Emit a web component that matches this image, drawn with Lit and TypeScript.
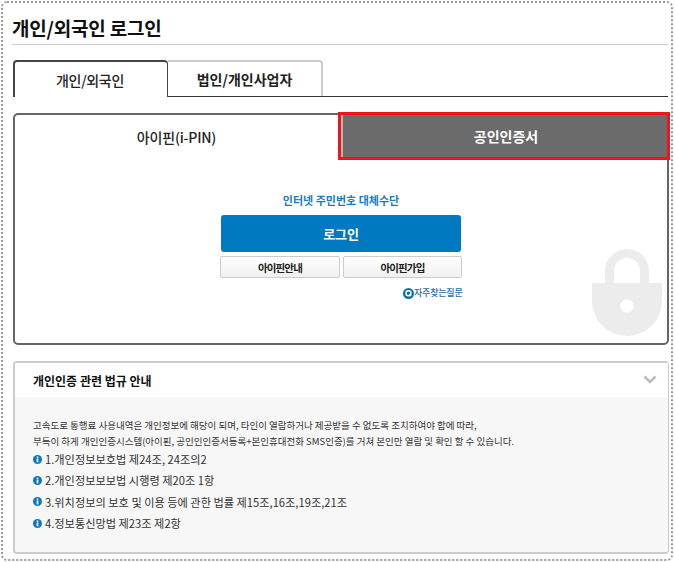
import { LitElement, html, css } from "lit";
import { customElement } from "lit/decorators.js";

const info = html`<svg class="info" viewBox="0 0 10 10" aria-hidden="true"><circle cx="5" cy="5" r="5" fill="#0d78bf"/><rect x="4.100" y="1.700" width="1.800" height="1.500" fill="#fff"/><rect x="4.100" y="3.900" width="1.800" height="4.300" fill="#fff"/></svg>`;

@customElement("app-root")
export class AppRoot extends LitElement {
  static styles = css`
    :host {
      display: block;
      width: 675px;
      height: 562px;
      box-sizing: border-box;
      padding: 1px;
      background: #fff;
      font-family: "Noto Sans CJK KR", "Noto Sans", sans-serif;
      color: #222;
    }
    * { box-sizing: border-box; }
    .frame {
      height: 100%;
      width: 672px;
      border: 2px dotted #9a9a9a;
      border-radius: 6px;
      padding-left: 10px;
      display: flex;
      flex-direction: column;
    }
    .title {
      margin: 0 0 0 -1px;
      height: 42px;
      width: 656px;
      padding-top: 12px;
      border-bottom: 1px solid #ccc;
      font-size: 19px;
      line-height: 26px;
      font-weight: 700;
      color: #111;
      letter-spacing: -0.2px;
      flex: none;
    }
    .tabs {
      margin-top: 15px;
      display: flex;
      width: 655px;
      height: 37px;
      border-bottom: 1px solid #333;
      flex: none;
    }
    .tab {
      width: 155px;
      height: 36px;
      border: 2px solid #ccc;
      border-bottom: 0;
      border-left: 0;
      border-radius: 0 4px 0 0;
      display: flex;
      align-items: center;
      justify-content: center;
      font-size: 14px;
      font-weight: 700;
      color: #222;
      background: #fff;
    }
    .tab.on {
      width: 155px;
      height: 37px;
      padding-right: 2px;
      border: 1px solid #444;
      border-width: 2px 1px 0 2px;
      border-radius: 4px 4px 0 0;
      font-weight: 500;
      letter-spacing: -0.3px;
    }
    .panel {
      margin-top: 16px;
      width: 656px;
      height: 232px;
      border: 2px solid #666;
      border-radius: 5px;
      position: relative;
      display: flex;
      flex-direction: column;
      align-items: center;
      flex: none;
    }
    .subtabs {
      align-self: stretch;
      display: flex;
      height: 48px;
      margin: -3px -3px 0 0;
    }
    .sub {
      flex: 1;
      display: flex;
      align-items: center;
      justify-content: center;
      padding-top: 2px;
      font-size: 14px;
      font-weight: 500;
      letter-spacing: -0.2px;
      color: #222;
    }
    .sub.on {
      flex: none;
      width: 332px;
      padding: 0 0 0 4px;
      border: 3px solid #f0141c;
      background: #6b6b6b;
      box-shadow: inset 2px 0 0 #b5b5b5;
      color: #fff;
      font-weight: 700;
      letter-spacing: 0;
    }
    .lead {
      margin-top: 32px;
      font-size: 11px;
      line-height: 16px;
      font-weight: 700;
      color: #1a7cc2;
    }
    .login {
      margin-top: 7px;
      width: 240px;
      height: 37px;
      border-radius: 3px;
      background: #0079c2;
      color: #fff;
      display: flex;
      align-items: center;
      justify-content: center;
      font-size: 13px;
      font-weight: 700;
      letter-spacing: -0.2px;
    }
    .btns {
      margin-top: 4px;
      display: flex;
      gap: 3px;
    }
    .btn {
      height: 22px;
      border: 1px solid #ccc;
      border-radius: 2px;
      background: linear-gradient(#fff, #f0f0f0);
      display: flex;
      align-items: center;
      justify-content: center;
      font-size: 10.500px;
      font-weight: 700;
      letter-spacing: -0.9px;
      color: #222;
    }
    .btn.a { width: 120px; }
    .btn.b { width: 119px; }
    .faq {
      margin: 8px 0 0 3px;
      width: 240px;
      display: flex;
      justify-content: flex-end;
      align-items: center;
      font-size: 9px;
      line-height: 14px;
      font-weight: 500;
      color: #1a6ea8;
      letter-spacing: -0.2px;
    }
    .faq svg { width: 11px; height: 11px; flex: none; }
    .lock {
      position: absolute;
      right: 5px;
      bottom: 7px;
      width: 70px;
      height: 87px;
    }
    .notice {
      margin-top: 16px;
      width: 656px;
      height: 193px;
      border: 1px solid #ccc;
      border-width: 2px 1px 2px 2px;
      border-radius: 4px;
      background: #f7f7f7;
      display: flex;
      flex-direction: column;
      flex: none;
    }
    .head {
      height: 34px;
      flex: none;
      background: #fff;
      display: flex;
      align-items: center;
      justify-content: space-between;
      padding: 1px 11px 0 18px;
      font-size: 12px;
      font-weight: 700;
      color: #111;
    }
    .head svg { width: 14px; height: 9px; margin-top: -3px; }
    .body { padding: 20px 18px 0; }
    .body p {
      margin: 0;
      font-size: 9.500px;
      line-height: 16px;
      color: #333;
    }
    .law {
      margin: 2px 0 0;
      padding: 0;
      list-style: none;
      display: flex;
      flex-direction: column;
      gap: 5.400px;
    }
    .law li {
      display: flex;
      align-items: center;
      gap: 3px;
      height: 16px;
      font-size: 11.200px;
      line-height: 16px;
      color: #333;
    }
    .info { width: 9px; height: 9px; flex: none; }
  `;

  render() {
    return html`
      <div class="frame">
        <h1 class="title">개인/외국인 로그인</h1>
        <div class="tabs">
          <div class="tab on">개인/외국인</div>
          <div class="tab">법인/개인사업자</div>
        </div>
        <div class="panel">
          <svg class="lock" viewBox="0 0 70 87" aria-hidden="true">
            <path fill="#ececec" d="M13 34V22A22 22 0 0 1 57 22V34H48V22A13 13 0 0 0 22 22V34Z"/>
            <path fill="#ececec" fill-rule="evenodd" d="M0 34H70V52A35 35 0 0 1 0 52ZM35 50.500a6.500 6.500 0 1 0 .01 0Z"/>
          </svg>
          <div class="subtabs">
            <div class="sub">아이핀(i-PIN)</div>
            <div class="sub on">공인인증서</div>
          </div>
          <div class="lead">인터넷 주민번호 대체수단</div>
          <div class="login">로그인</div>
          <div class="btns">
            <div class="btn a">아이핀안내</div>
            <div class="btn b">아이핀가입</div>
          </div>
          <div class="faq">
            <svg viewBox="0 0 11 11" aria-hidden="true"><circle cx="5.500" cy="5.500" r="5.500" fill="#0d6fae"/><circle cx="5.500" cy="5.300" r="2.500" fill="none" stroke="#fff" stroke-width="1.400"/><path d="M6.200 6.200 8 8" stroke="#fff" stroke-width="1.200"/></svg>
            <span>자주찾는질문</span>
          </div>
        </div>
        <section class="notice">
          <div class="head">
            <span>개인인증 관련 법규 안내</span>
            <svg viewBox="0 0 14 9" aria-hidden="true"><path d="M1.500 1.500 7 7l5.500-5.500" fill="none" stroke="#bbb" stroke-width="2.600"/></svg>
          </div>
          <div class="body">
            <p>고속도로 통행료 사용내역은 개인정보에 해당이 되며, 타인이 열람하거나 제공받을 수 없도록 조치하여야 함에 따라,</p>
            <p>부득이 하게 개인인증시스템(아이핀, 공인인인증서등록+본인휴대전화 SMS인증)를 거쳐 본인만 열람 및 확인 할 수 있습니다.</p>
            <ul class="law">
              <li>${info}<span>1.개인정보보호법 제24조, 24조의2</span></li>
              <li>${info}<span>2.개인정보보보법 시행령 제20조 1항</span></li>
              <li>${info}<span>3.위치정보의 보호 및 이용 등에 관한 법률 제15조,16조,19조,21조</span></li>
              <li>${info}<span>4.정보통신망법 제23조 제2항</span></li>
            </ul>
          </div>
        </section>
      </div>
    `;
  }
}
